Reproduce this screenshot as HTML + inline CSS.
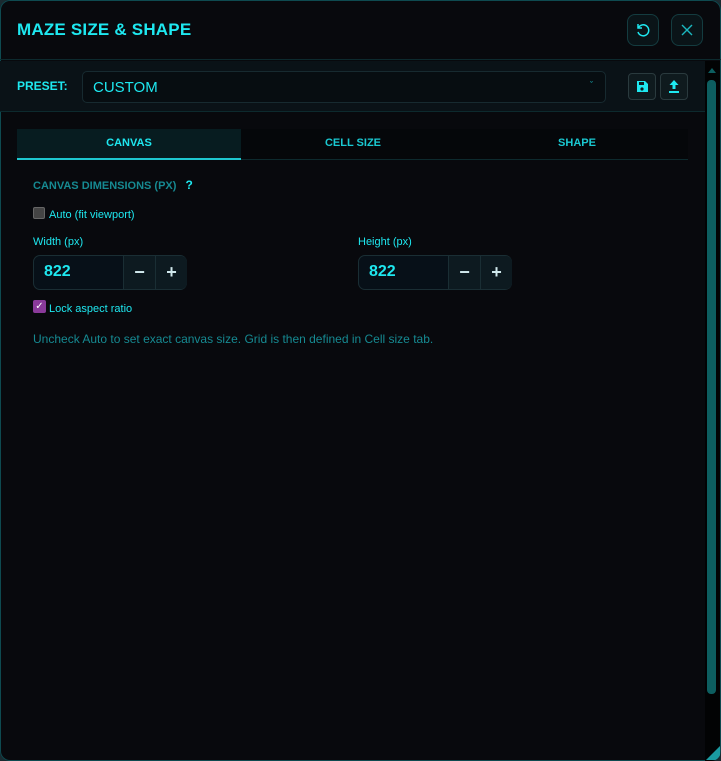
<!DOCTYPE html>
<html><head><meta charset="utf-8"><style>
*{box-sizing:border-box;margin:0;padding:0}
body{width:721px;height:761px;background:#1a2a30;overflow:hidden;font-family:"Liberation Sans",sans-serif;position:relative}
.dlg{position:absolute;left:0;top:0;width:721px;height:761px;background:#08090d;box-shadow:inset 0 0 0 1px #0e4a50;border-radius:10px;overflow:hidden}
.hdr{position:absolute;left:0;top:0;width:721px;height:60px;border-bottom:1px solid #0d2a2e}
.title{position:absolute;left:17px;top:20px;color:#1ee8f0;font-weight:bold;font-size:17px;letter-spacing:0.2px}
.ib{position:absolute;width:32px;height:32px;border:1px solid #143c40;border-radius:8px;background:#0a1418}
.preset{position:absolute;left:0;top:61px;width:705px;height:51px;background:#0a1217;border-bottom:1px solid #0d2a2e}
.pl{position:absolute;left:17px;top:18px;color:#1ee8f0;font-weight:bold;font-size:12px}
.sel{position:absolute;left:82px;top:10px;width:524px;height:32px;border:1px solid #172a30;border-radius:5px;background:#070d11;color:#1ee8f0;font-size:15px;padding:7px 10px}
.sb{position:absolute;top:12px;width:28px;height:27px;border:1px solid #2a3a3e;border-radius:4px;background:#0f1a1e}
.scroll{position:absolute;left:705px;top:61px;width:15px;height:700px;background:#020304}
.thumb{position:absolute;left:2px;top:19px;width:9px;height:614px;background:#0d5e60;border-radius:4px}
.tabs{position:absolute;left:17px;top:129px;width:671px;height:31px;background:#05070a;border-bottom:1px solid #0d2a2e}
.tab{position:absolute;top:0;height:31px;width:224px;text-align:center;color:#1ac9d2;font-size:11px;font-weight:bold;line-height:29px}
.t1{left:0;background:#071c20;color:#1ee8f0;border-bottom:2px solid #1ec8d0}
.lbl{position:absolute;color:#1ee8f0;font-size:11px}
.num{position:absolute;top:255px;width:154px;height:35px;border:1px solid #1a2e34;border-radius:7px;background:#071018}
.num .v{position:absolute;left:10px;top:7px;color:#1ee8f0;font-weight:bold;font-size:16px}
.num .m,.num .p{position:absolute;top:0;width:32px;height:33px;background:#0d1a20;color:#d0e8ec;font-weight:bold;font-size:18px;text-align:center;line-height:32px}
.num .m{left:89px;border-left:1px solid #1a2e34}
.num .p{left:121px;border-left:1px solid #1a2e34;border-radius:0 6px 6px 0}
</style></head><body>
<div class="dlg">
 <div class="hdr">
  <div class="title">MAZE SIZE &amp; SHAPE</div>
  <div class="ib" style="left:627px;top:14px"><svg width="30" height="30" viewBox="0 0 30 30"><path d="M10.5 12.5 A5.5 5.5 0 1 1 10 17" fill="none" stroke="#1ee8f0" stroke-width="1.5"/><path d="M10 9v4h4" fill="none" stroke="#1ee8f0" stroke-width="1.5"/></svg></div>
  <div class="ib" style="left:671px;top:14px"><svg width="30" height="30" viewBox="0 0 30 30"><path d="M10 10L20 20M20 10L10 20" stroke="#1ab8c0" stroke-width="1.4"/></svg></div>
 </div>
 <div class="preset">
  <div class="pl">PRESET:</div>
  <div class="sel">CUSTOM<span style="position:absolute;right:12px;top:8px;font-size:9px;color:#1ab8c0">&#711;</span></div>
  <div class="sb" style="left:628px"><svg width="26" height="25" viewBox="0 0 26 25"><path d="M8 7h8l3 3v8H8z" fill="#1ee8f0"/><rect x="10" y="8" width="5" height="3" fill="#0f1a1e"/><circle cx="13" cy="15" r="1.6" fill="#0f1a1e"/></svg></div>
  <div class="sb" style="left:660px"><svg width="26" height="25" viewBox="0 0 26 25"><path d="M13 6l-4.5 5h3v4h3v-4h3z" fill="#1ee8f0"/><rect x="8" y="17" width="10" height="2" fill="#1ee8f0"/></svg></div>
 </div>
 <div class="scroll"><div style="position:absolute;left:3px;top:7px;border-left:4px solid transparent;border-right:4px solid transparent;border-bottom:5px solid #0d5e60"></div><div class="thumb"></div></div>
 <div class="tabs"><div class="tab t1">CANVAS</div><div class="tab" style="left:224px">CELL SIZE</div><div class="tab" style="left:448px">SHAPE</div></div>
 <div class="lbl" style="left:33px;top:178px;color:#168a92;font-weight:bold">CANVAS DIMENSIONS (PX) <span style="color:#1ee8f0;margin-left:6px;font-size:12px">?</span></div>
 <div style="position:absolute;left:33px;top:207px;width:12px;height:12px;background:#444;border:1px solid #666;border-radius:2px"></div>
 <div class="lbl" style="left:49px;top:209px">Auto (fit viewport)</div>
 <div class="lbl" style="left:33px;top:236px">Width (px)</div>
 <div class="lbl" style="left:358px;top:236px">Height (px)</div>
 <div class="num" style="left:33px"><div class="v">822</div><div class="m">−</div><div class="p">+</div></div>
 <div class="num" style="left:358px"><div class="v">822</div><div class="m">−</div><div class="p">+</div></div>
 <div style="position:absolute;left:33px;top:300px;width:13px;height:13px;background:#8a3a9a;border-radius:2px;color:#fff;font-size:10px;line-height:13px;text-align:center">✓</div>
 <div class="lbl" style="left:49px;top:303px">Lock aspect ratio</div>
 <div class="lbl" style="left:33px;top:332px;color:#168a92;font-size:12px">Uncheck Auto to set exact canvas size. Grid is then defined in Cell size tab.</div>
 <div style="position:absolute;left:706px;top:746px;width:0;height:0;border-left:14px solid transparent;border-bottom:14px solid #1a9aa0"></div>
</div>
</body></html>
